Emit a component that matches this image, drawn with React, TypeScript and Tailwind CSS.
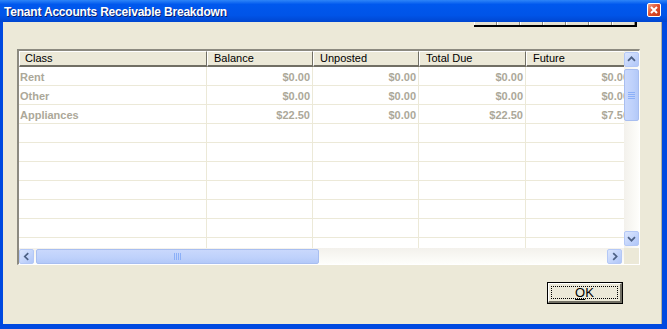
import React from 'react';

type Row = { cls: string; vals: string[] };

const rows: Row[] = [
  { cls: 'Rent', vals: ['$0.00', '$0.00', '$0.00', '$0.00'] },
  { cls: 'Other', vals: ['$0.00', '$0.00', '$0.00', '$0.00'] },
  { cls: 'Appliances', vals: ['$22.50', '$0.00', '$22.50', '$7.50'] },
];

const emptyRows = Array.from({ length: 7 });

const numWidths = ['w-[106px]', 'w-[106px]', 'w-[107px]', 'w-[106px]'];

const Chevron = ({ dir }: { dir: 'up' | 'down' | 'left' | 'right' }) => {
  const d = {
    up: 'M3.5 9 L7.5 5 L11.5 9',
    down: 'M3.5 6 L7.5 10 L11.5 6',
    left: 'M9.5 3.5 L5.5 7.5 L9.5 11.5',
    right: 'M6 3.5 L10 7.5 L6 11.5',
  }[dir];
  return (
    <svg width="15" height="15" viewBox="0 0 15 15">
      <path d={d} fill="none" stroke="#4D6185" strokeWidth="2" />
    </svg>
  );
};

const ScrollBtn = ({ dir }: { dir: 'up' | 'down' | 'left' | 'right' }) => (
  <div className="w-[15px] h-[15px] rounded-[2px] border border-[#B4C8F6] bg-[linear-gradient(135deg,#DCE6FD,#C1D3FB_60%,#B0C6F8)] flex items-center justify-center">
    <Chevron dir={dir} />
  </div>
);

const App = () => {
  return (
    <div className="w-[667px] h-[329px] flex flex-col bg-[#0049E0] font-['Liberation_Sans',Arial,sans-serif] select-none">
      {/* Title bar */}
      <div className="h-[22px] flex items-center justify-between bg-[linear-gradient(to_bottom,#2E85F8,#0058EE_20%,#0054E8_70%,#0046D0)]">
        <span className="pl-[4px] pt-[1px] text-white font-bold text-[12px] tracking-[-0.2px] [text-shadow:1px_1px_0_#0A1E6E]">
          Tenant Accounts Receivable Breakdown
        </span>
        <div className="mr-[6px] mb-[2px] w-[14px] h-[14px] rounded-[2px] border border-white bg-[linear-gradient(135deg,#F0A48A,#E04C2A_50%,#C43A1A)] flex items-center justify-center">
          <svg width="10" height="10" viewBox="0 0 10 10">
            <path d="M2 2 L8 8 M8 2 L2 8" stroke="white" strokeWidth="2" />
          </svg>
        </div>
      </div>

      {/* Body */}
      <div className="flex-1 ml-[3px] mr-[5px] mb-[5px] bg-[#ECE9D8] border-r border-[#B0AE9F] flex flex-col">
        {/* clipped tab strip */}
        <div className="flex justify-end pr-[24px]">
          <div className="flex h-[5px] border-b-2 border-r-2 border-black">
            {Array.from({ length: 7 }).map((_, i) => (
              <div
                key={i}
                className="w-[23px] h-full bg-[#E4E1D2] border-r border-[#8C8A7E] border-l border-l-white"
              />
            ))}
          </div>
        </div>

        {/* Grid */}
        <div className="ml-[14px] mt-[22px] w-[623px] h-[216px] border-t-2 border-l-2 border-t-[#8C8A80] border-l-[#8C8A80] border-r border-b border-r-white border-b-white flex flex-col">
          <div className="flex h-[197px]">
            <div className="w-[605px] overflow-hidden flex flex-col">
              {/* Header */}
              <div className="flex h-[16px] shrink-0 text-[11px] text-black">
                <div className="w-[188px] shrink-0 bg-[#ECE9D8] border-l border-t border-white border-r border-r-[#716F64] border-b-2 border-b-[#716F64] pl-[5px] leading-[13px]">
                  Class
                </div>
                {['Balance', 'Unposted', 'Total Due', 'Future'].map((h, i) => (
                  <div
                    key={h}
                    className={`${numWidths[i]} shrink-0 bg-[#ECE9D8] border-l border-t border-white border-r border-r-[#716F64] border-b-2 border-b-[#716F64] pl-[6px] leading-[13px]`}
                  >
                    {h}
                  </div>
                ))}
              </div>

              {/* Rows */}
              <div className="flex-1 bg-white overflow-hidden">
                {rows.map((r) => (
                  <div key={r.cls} className="flex h-[19px] border-b border-[#ECE9D8] text-[11px] font-bold text-[#ACA899]">
                    <div className="w-[188px] shrink-0 border-r border-[#ECE9D8] pl-[1px] pt-[2px] leading-[17px]">{r.cls}</div>
                    {r.vals.map((v, i) => (
                      <div
                        key={i}
                        className={`${numWidths[i]} shrink-0 border-r border-[#ECE9D8] pr-[2px] pt-[2px] text-right leading-[17px]`}
                      >
                        {v}
                      </div>
                    ))}
                  </div>
                ))}
                {emptyRows.map((_, k) => (
                  <div key={k} className="flex h-[19px] border-b border-[#ECE9D8]">
                    <div className="w-[188px] shrink-0 border-r border-[#ECE9D8]" />
                    {numWidths.map((w, i) => (
                      <div key={i} className={`${w} shrink-0 border-r border-[#ECE9D8]`} />
                    ))}
                  </div>
                ))}
              </div>
            </div>

            {/* Vertical scrollbar */}
            <div className="w-[15px] flex flex-col bg-[linear-gradient(to_right,#F3F1EC,#FEFEFB)] pt-[1px]">
              <ScrollBtn dir="up" />
              <div className="mt-[2px] h-[52px] rounded-[2px] border border-[#A8BEF0] bg-[linear-gradient(to_right,#C9D8FC,#BED1FB_60%,#B3C9F8)] flex flex-col items-center justify-center gap-[1px]">
                {[0, 1, 2, 3].map((i) => (
                  <div key={i} className="w-[7px] h-[1px] bg-[#EEF4FE] border-b border-[#8CB0F8]" />
                ))}
              </div>
              <div className="flex-1" />
              <ScrollBtn dir="down" />
              <div className="h-[2px]" />
            </div>
          </div>

          {/* Horizontal scrollbar */}
          <div className="flex h-[16px]">
            <div className="w-[605px] flex items-center bg-[linear-gradient(to_bottom,#F3F1EC,#FEFEFB)]">
              <ScrollBtn dir="left" />
              <div className="ml-[2px] w-[283px] h-[15px] rounded-[2px] border border-[#A8BEF0] bg-[linear-gradient(to_bottom,#C9D8FC,#BED1FB_60%,#B3C9F8)] flex items-center justify-center gap-[1px]">
                {[0, 1, 2, 3].map((i) => (
                  <div key={i} className="w-[1px] h-[7px] bg-[#EEF4FE] border-r border-[#8CB0F8]" />
                ))}
              </div>
              <div className="flex-1" />
              <ScrollBtn dir="right" />
              <div className="w-[2px]" />
            </div>
            <div className="w-[15px] bg-[#ECE9D8]" />
          </div>
        </div>

        {/* OK button */}
        <div className="flex justify-end pr-[38px] mt-[17px]">
          <button className="w-[76px] h-[22px] border border-black bg-[#ECE9D8] p-0">
            <div className="w-full h-full border-t border-l border-white border-r-2 border-b-2 border-r-[#716F64] border-b-[#716F64] p-[2px]">
              <div className="w-full h-full border border-dotted border-black flex items-center justify-center text-[13px] leading-none text-black">
                <span className="underline underline-offset-2">O</span>K
              </div>
            </div>
          </button>
        </div>
      </div>
    </div>
  );
};

export default App;
